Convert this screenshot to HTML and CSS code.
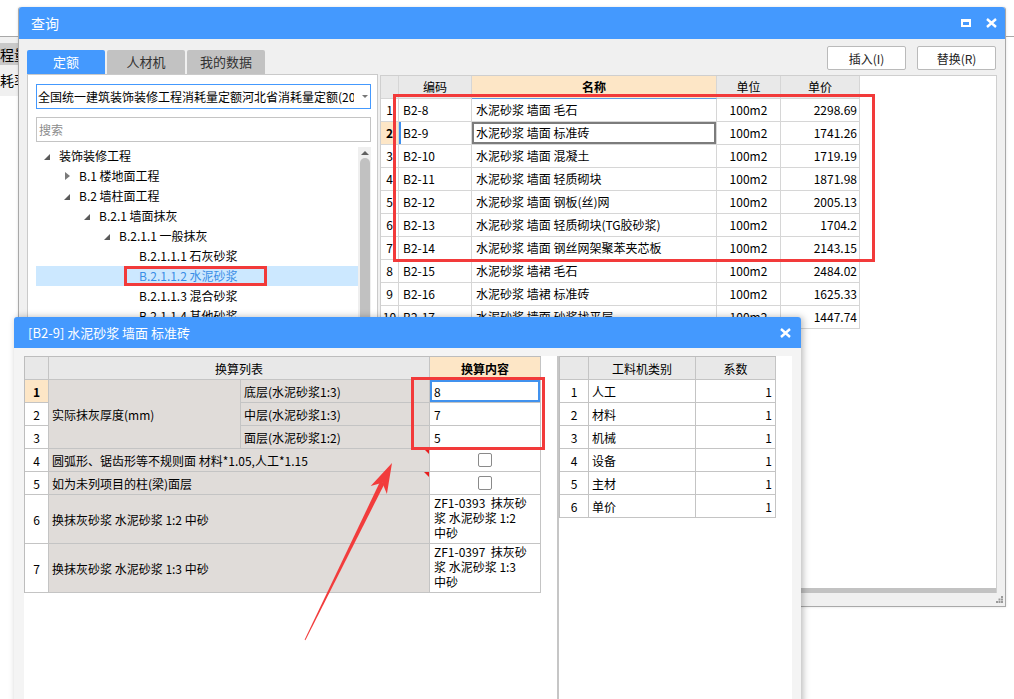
FILE: index.html
```html
<!DOCTYPE html>
<html lang="zh-CN">
<head>
<meta charset="utf-8">
<title>查询</title>
<link rel="stylesheet" href="styles.css">
</head>
<body>
<div class="desk">
  <div class="bg-app">
    <div class="bg-row bg-row-a">程量</div>
    <div class="bg-row bg-row-b">耗率</div>
  </div>
  <div class="bg-line-right"></div>

  <div class="win win-main">
    <div class="titlebar">
      <span class="title">查询</span>
      <span class="tb-icons">
        <span class="ic-max"></span>
        <svg class="ic-close" width="11" height="10" viewBox="0 0 11 10"><path d="M1 1 L10 9 M10 1 L1 9" stroke="#fff" stroke-width="2.4" fill="none"/></svg>
      </span>
    </div>
    <div class="main-body">
      <div class="left-col">
        <div class="tabs">
          <div class="tab active">定额</div>
          <div class="tab">人材机</div>
          <div class="tab">我的数据</div>
        </div>
        <div class="lib-panel">
          <div class="select"><span class="select-text">全国统一建筑装饰装修工程消耗量定额河北省消耗量定额(2012)</span><span class="caret"></span></div>
          <div class="search">搜索</div>
          <div class="tree-wrap">
            <ul class="tree">
              <li class="ti lv0"><span class="tri"><span class="exp"></span></span>装饰装修工程</li>
              <li class="ti lv1"><span class="tri"><span class="col"></span></span>B.1 楼地面工程</li>
              <li class="ti lv1"><span class="tri"><span class="exp"></span></span>B.2 墙柱面工程</li>
              <li class="ti lv2"><span class="tri"><span class="exp"></span></span>B.2.1 墙面抹灰</li>
              <li class="ti lv3"><span class="tri"><span class="exp"></span></span>B.2.1.1 一般抹灰</li>
              <li class="ti lv4"><span class="tri"></span>B.2.1.1.1 石灰砂浆</li>
              <li class="ti lv4 sel"><span class="tri"></span>B.2.1.1.2 水泥砂浆</li>
              <li class="ti lv4"><span class="tri"></span>B.2.1.1.3 混合砂浆</li>
              <li class="ti lv4"><span class="tri"></span>B.2.1.1.4 其他砂浆</li>
            </ul>
            <div class="vscroll"><span class="arrow-up"></span><span class="thumb"></span></div>
          </div>
        </div>
      </div>
      <div class="right-col">
        <div class="btn-row">
          <button class="btn">插入(I)</button>
          <button class="btn">替换(R)</button>
        </div>
        <div class="grid-panel">
          <div class="grid">
            <div class="c h n"></div><div class="c h">编码</div><div class="c h hl">名称</div><div class="c h">单位</div><div class="c h">单价</div>

            <div class="c n">1</div><div class="c">B2-8</div><div class="c">水泥砂浆 墙面 毛石</div><div class="c u">100m2</div><div class="c p">2298.69</div>
            <div class="c n cur">2</div><div class="c code-cur">B2-9</div><div class="c name-sel">水泥砂浆 墙面 标准砖</div><div class="c u">100m2</div><div class="c p">1741.26</div>
            <div class="c n">3</div><div class="c">B2-10</div><div class="c">水泥砂浆 墙面 混凝土</div><div class="c u">100m2</div><div class="c p">1719.19</div>
            <div class="c n">4</div><div class="c">B2-11</div><div class="c">水泥砂浆 墙面 轻质砌块</div><div class="c u">100m2</div><div class="c p">1871.98</div>
            <div class="c n">5</div><div class="c">B2-12</div><div class="c">水泥砂浆 墙面 钢板(丝)网</div><div class="c u">100m2</div><div class="c p">2005.13</div>
            <div class="c n">6</div><div class="c">B2-13</div><div class="c">水泥砂浆 墙面 轻质砌块(TG胶砂浆)</div><div class="c u">100m2</div><div class="c p">1704.2</div>
            <div class="c n">7</div><div class="c">B2-14</div><div class="c">水泥砂浆 墙面 钢丝网架聚苯夹芯板</div><div class="c u">100m2</div><div class="c p">2143.15</div>
            <div class="c n">8</div><div class="c">B2-15</div><div class="c">水泥砂浆 墙裙 毛石</div><div class="c u">100m2</div><div class="c p">2484.02</div>
            <div class="c n">9</div><div class="c">B2-16</div><div class="c">水泥砂浆 墙裙 标准砖</div><div class="c u">100m2</div><div class="c p">1625.33</div>
            <div class="c n">10</div><div class="c">B2-17</div><div class="c">水泥砂浆 墙面 砂浆找平层</div><div class="c u">100m2</div><div class="c p">1447.74</div>
          </div>
          <div class="hscroll"></div>
        </div>
      </div>
    </div>
    <svg class="grip" width="7" height="7" viewBox="0 0 7 7"><rect x="5" y="0" width="2" height="2" fill="#9a9a9a"/><rect x="2.5" y="2.5" width="2" height="2" fill="#9a9a9a"/><rect x="5" y="2.5" width="2" height="2" fill="#9a9a9a"/><rect x="0" y="5" width="2" height="2" fill="#9a9a9a"/><rect x="2.5" y="5" width="2" height="2" fill="#9a9a9a"/><rect x="5" y="5" width="2" height="2" fill="#9a9a9a"/></svg>
  </div>

  <div class="win win-sub">
    <div class="titlebar sub">
      <span class="title">[B2-9] 水泥砂浆 墙面 标准砖</span>
      <svg class="ic-close" width="11" height="10" viewBox="0 0 11 10"><path d="M1 1 L10 9 M10 1 L1 9" stroke="#fff" stroke-width="2.4" fill="none"/></svg>
    </div>
    <div class="sub-body">
      <div class="sub-content">
        <div class="sub-left">
          <div class="calc">
            <div class="t h"></div><div class="t h span-ab">换算列表</div><div class="t h hl">换算内容</div>

            <div class="t num cur k1">1</div><div class="t lab k2 span-r3">实际抹灰厚度(mm)</div><div class="t lab k3">底层(水泥砂浆1:3)</div><div class="t val sel k4">8</div>
            <div class="t num k1">2</div><div class="t lab k3">中层(水泥砂浆1:3)</div><div class="t val k4">7</div>
            <div class="t num k1">3</div><div class="t lab k3">面层(水泥砂浆1:2)</div><div class="t val k4">5</div>
            <div class="t num k1">4</div><div class="t lab span-ab flag">圆弧形、锯齿形等不规则面 材料*1.05,人工*1.15</div><div class="t chk k4"><span class="box"></span></div>
            <div class="t num k1">5</div><div class="t lab span-ab flag">如为未列项目的柱(梁)面层</div><div class="t chk k4"><span class="box"></span></div>
            <div class="t num k1">6</div><div class="t lab span-ab">换抹灰砂浆 水泥砂浆 1:2 中砂</div><div class="t val multi k4">ZF1-0393&nbsp; 抹灰砂<br>浆 水泥砂浆 1:2<br>中砂</div>
            <div class="t num k1">7</div><div class="t lab span-ab">换抹灰砂浆 水泥砂浆 1:3 中砂</div><div class="t val multi k4">ZF1-0397&nbsp; 抹灰砂<br>浆 水泥砂浆 1:3<br>中砂</div>
          </div>
        </div>
        <div class="sub-divider"></div>
        <div class="sub-right">
          <div class="coef">
            <div class="t h"></div><div class="t h">工料机类别</div><div class="t h">系数</div>
            <div class="t num">1</div><div class="t">人工</div><div class="t r">1</div>
            <div class="t num">2</div><div class="t">材料</div><div class="t r">1</div>
            <div class="t num">3</div><div class="t">机械</div><div class="t r">1</div>
            <div class="t num">4</div><div class="t">设备</div><div class="t r">1</div>
            <div class="t num">5</div><div class="t">主材</div><div class="t r">1</div>
            <div class="t num">6</div><div class="t">单价</div><div class="t r">1</div>
          </div>
        </div>
      </div>
    </div>
  </div>

  <div class="mark mark-grid"></div>
  <div class="mark mark-tree"></div>
  <div class="mark mark-calc"></div>

  <svg class="arrow" width="1014" height="699" viewBox="0 0 1014 699">
    <polygon points="305.4,640.2 304.6,639.8 380.1,481.6 384.5,483.8" fill="#f23c3c"/>
    <polygon points="392,463 386.9,493.9 382.3,482.7 370.7,485.9" fill="#f23c3c"/>
  </svg>
</div>
</body>
</html>
```

FILE: styles.css
```css
* { box-sizing: border-box; }
html, body { margin: 0; padding: 0; }
body {
  width: 1014px;
  height: 699px;
  overflow: hidden;
  background: #fff;
  font-family: "Noto Sans CJK SC", "Microsoft YaHei", sans-serif;
  font-size: 12px;
  color: #000;
}
.desk { position: relative; width: 1014px; height: 699px; overflow: hidden; }

/* background application fragments */
.bg-app {
  position: absolute; left: 0; top: 36px; width: 18px; height: 60px;
  border-top: 1px solid #a8a8a8; background: #f0f0f0; overflow: hidden; padding-top: 6px;
}
.bg-row { height: 22px; line-height: 22px; font-size: 14px; white-space: nowrap; }
.bg-row-a { background: #c9c9c9; }
.bg-row-b { height: 30px; line-height: 30px; }
.bg-line-right { position: absolute; left: 1006px; top: 36px; width: 8px; height: 1px; background: #a8a8a8; }

/* windows */
.win { position: absolute; display: flex; flex-direction: column; border-radius: 3px 3px 0 0; }
.win-main {
  left: 18px; top: 7px; width: 988px; height: 600px;
  background: #f0f0f0; border: 1px solid #a9a9a9; border-top: none;
  box-shadow: 0 0 3px rgba(0,0,0,0.12);
}
.titlebar {
  height: 32px; flex: none; background: #4499fe; color: #fff;
  display: flex; align-items: center; justify-content: space-between;
  padding: 0 8px 0 12px; border-radius: 3px 3px 0 0;
}
.title { font-size: 14px; }
.tb-icons { display: flex; align-items: center; gap: 15px; }
.ic-max { width: 10px; height: 8px; border: 2px solid #fff; border-top-width: 3px; }
.ic-close { display: block; }

.main-body { flex: 1; display: flex; gap: 2px; padding: 0 8px 0 8px; min-height: 0; }
.left-col { width: 351px; display: flex; flex-direction: column; }
.tabs { margin-top: 11px; display: flex; gap: 2px; height: 24px; flex: none; }
.tab {
  width: 78px; height: 24px; line-height: 24px; text-align: center;
  background: #c2c2c2; color: #333; font-size: 13px; border-radius: 2px 2px 0 0;
}
.tab.active { background: #4499fe; color: #fff; }
.lib-panel {
  flex: 1; background: #fff; border: 1px solid #cacaca;
  padding: 9px 6px 0 8px; display: flex; flex-direction: column;
}
.select {
  height: 25px; flex: none; border: 1px solid #4499fe; display: flex; align-items: center;
  padding-left: 1px; position: relative;
}
.select-text { width: 316px; overflow: hidden; white-space: nowrap; font-size: 12px; }
.caret {
  margin-left: 8px; width: 0; height: 0;
  border-left: 3px solid transparent; border-right: 3px solid transparent; border-top: 3px solid #777;
}
.search {
  margin-top: 8px; height: 25px; flex: none; border: 1px solid #c4c4c4; color: #8c8c8c;
  padding-left: 2px; line-height: 23px; font-size: 12px;
}
.tree-wrap { margin-top: 4px; flex: 1; display: flex; }
.tree { flex: 1; list-style: none; margin: 0; padding: 0; }
.ti { height: 20px; display: flex; align-items: center; white-space: nowrap; font-size: 12px; padding-bottom: 1px; }
.lv1 { padding-left: 20px; }
.lv2 { padding-left: 40px; }
.lv3 { padding-left: 60px; }
.lv4 { padding-left: 80px; }
.ti.sel { background: #cce8ff; color: #3a8ee6; }
.tri { width: 23px; height: 19px; flex: none; display: flex; align-items: center; padding-left: 8px; }
.exp {
  width: 0; height: 0; border-left: 6px solid transparent; border-bottom: 6px solid #5a5a5a; margin-top: 2px;
}
.col {
  width: 0; height: 0; margin-left: 1px;
  border-top: 4px solid transparent; border-bottom: 4px solid transparent; border-left: 5px solid #7a7a7a;
}
.vscroll { width: 13px; background: #efefef; display: flex; flex-direction: column; align-items: center; margin-top: 1px; }
.arrow-up {
  margin-top: 4px; width: 0; height: 0;
  border-left: 4px solid transparent; border-right: 4px solid transparent; border-bottom: 4px solid #606060;
}
.thumb { margin-top: 3px; width: 10px; flex: 1; background: #c1c1c1; border-radius: 5px 5px 0 0; }

.right-col { flex: 1; display: flex; flex-direction: column; min-width: 0; }
.btn-row { height: 36px; flex: none; display: flex; justify-content: flex-end; align-items: flex-start; gap: 11px; padding-top: 7px; padding-right: 1px; }
.btn {
  width: 79px; height: 24px; border: 1px solid #bababa; background: #fff; border-radius: 2px;
  font-family: inherit; font-size: 12px; color: #222; padding: 0;
}
.grid-panel {
  height: 518px; flex: none; border: 1px solid #cfcfcf; border-bottom: none; background: #fff;
  display: flex; flex-direction: column;
}
.hscroll { margin-top: auto; height: 5px; background: #c2c2c2; }
.grid {
  display: grid; grid-template-columns: 18px 73px 245px 64px 79px; grid-auto-rows: 23px; width: 479px;
}
.c {
  border-right: 1px solid #d6d6d6; border-bottom: 1px solid #d6d6d6;
  display: flex; align-items: center; padding: 0 4px 1px; white-space: nowrap; overflow: hidden; font-size: 12px;
}
.c.h { background: #e9e9e9; justify-content: center; }
.c.hl { background: #fde6c6; font-weight: bold; border-bottom-color: #5b9de8; }
.c.n { justify-content: center; padding: 0 0 1px; }
.c.n.cur { background: #fde6c6; font-weight: bold; }
.c.u { justify-content: center; }
.c.p { justify-content: flex-end; padding-right: 2px; }
.code-cur { box-shadow: inset 2px 0 0 #3d8ff0; }
.name-sel { box-shadow: inset 0 0 0 2px #7c7c7c; }
.grip { position: absolute; right: 2px; bottom: 3px; }

/* sub dialog */
.win-sub {
  left: 14px; top: 317px; width: 787px; height: 400px; background: #f4f4f4;
  box-shadow: 2px 0 7px rgba(0,0,0,0.28);
}
.titlebar.sub { height: 31px; padding: 0 10px 0 14px; }
.titlebar.sub .title { font-size: 13px; }
.sub-body { flex: 1; display: flex; padding: 8px 9px 0 10px; }
.sub-content { flex: 1; background: #fff; display: flex; }
.sub-left { width: 533px; }
.sub-divider { width: 2px; background: #c6c6c6; }
.sub-right { flex: 1; }
.calc {
  display: grid; grid-template-columns: 24px 192px 189px 111px;
  grid-template-rows: repeat(6, 23px) 49px 49px;
  border-left: 1px solid #bdbdbd; border-top: 1px solid #bdbdbd; width: 517px;
}
.coef {
  display: grid; grid-template-columns: 29px 107px 80px; grid-auto-rows: 23px;
  border-left: 1px solid #bdbdbd; border-top: 1px solid #bdbdbd; width: 217px;
}
.t {
  border-right: 1px solid #c4c4c4; border-bottom: 1px solid #c4c4c4;
  display: flex; align-items: center; padding: 0 3px; white-space: nowrap; font-size: 12px; overflow: hidden;
}
.t.h { background: #e8e8e8; justify-content: center; }
.t.hl { background: #fde6c6; font-weight: bold; }
.t.lab { background: #e0dcd9; }
.t.num { justify-content: center; padding: 0; }
.t.num.cur { background: #fde6c6; font-weight: bold; }
.t.val { padding-left: 4px; }
.t.val.sel { box-shadow: inset 0 0 0 2px #4192ee; }
.t.chk { justify-content: center; }
.t.multi { align-items: flex-start; padding-top: 0; line-height: 15px; white-space: nowrap; }
.t.r { justify-content: flex-end; padding-right: 3px; }
.span-ab { grid-column: 2 / 4; }
.span-r3 { grid-row: 2 / 5; }
.k1 { grid-column: 1; }
.k2 { grid-column: 2; }
.k3 { grid-column: 3; }
.k4 { grid-column: 4; }
.flag { position: relative; }
.flag::after {
  content: ""; position: absolute; top: 0; right: 0; width: 0; height: 0;
  border-top: 5px solid #e81e1e; border-left: 5px solid transparent;
}
.box { width: 14px; height: 14px; border: 1px solid #8a8a8a; border-radius: 2px; background: #fff; }

/* annotations */
.mark { position: absolute; border: 3px solid #f23a3a; }
.mark-grid { left: 393px; top: 94px; width: 482px; height: 168px; }
.mark-tree { left: 124px; top: 266px; width: 143px; height: 20px; }
.mark-calc { left: 411px; top: 377px; width: 134px; height: 73px; }
.arrow { position: absolute; left: 0; top: 0; pointer-events: none; }
```
